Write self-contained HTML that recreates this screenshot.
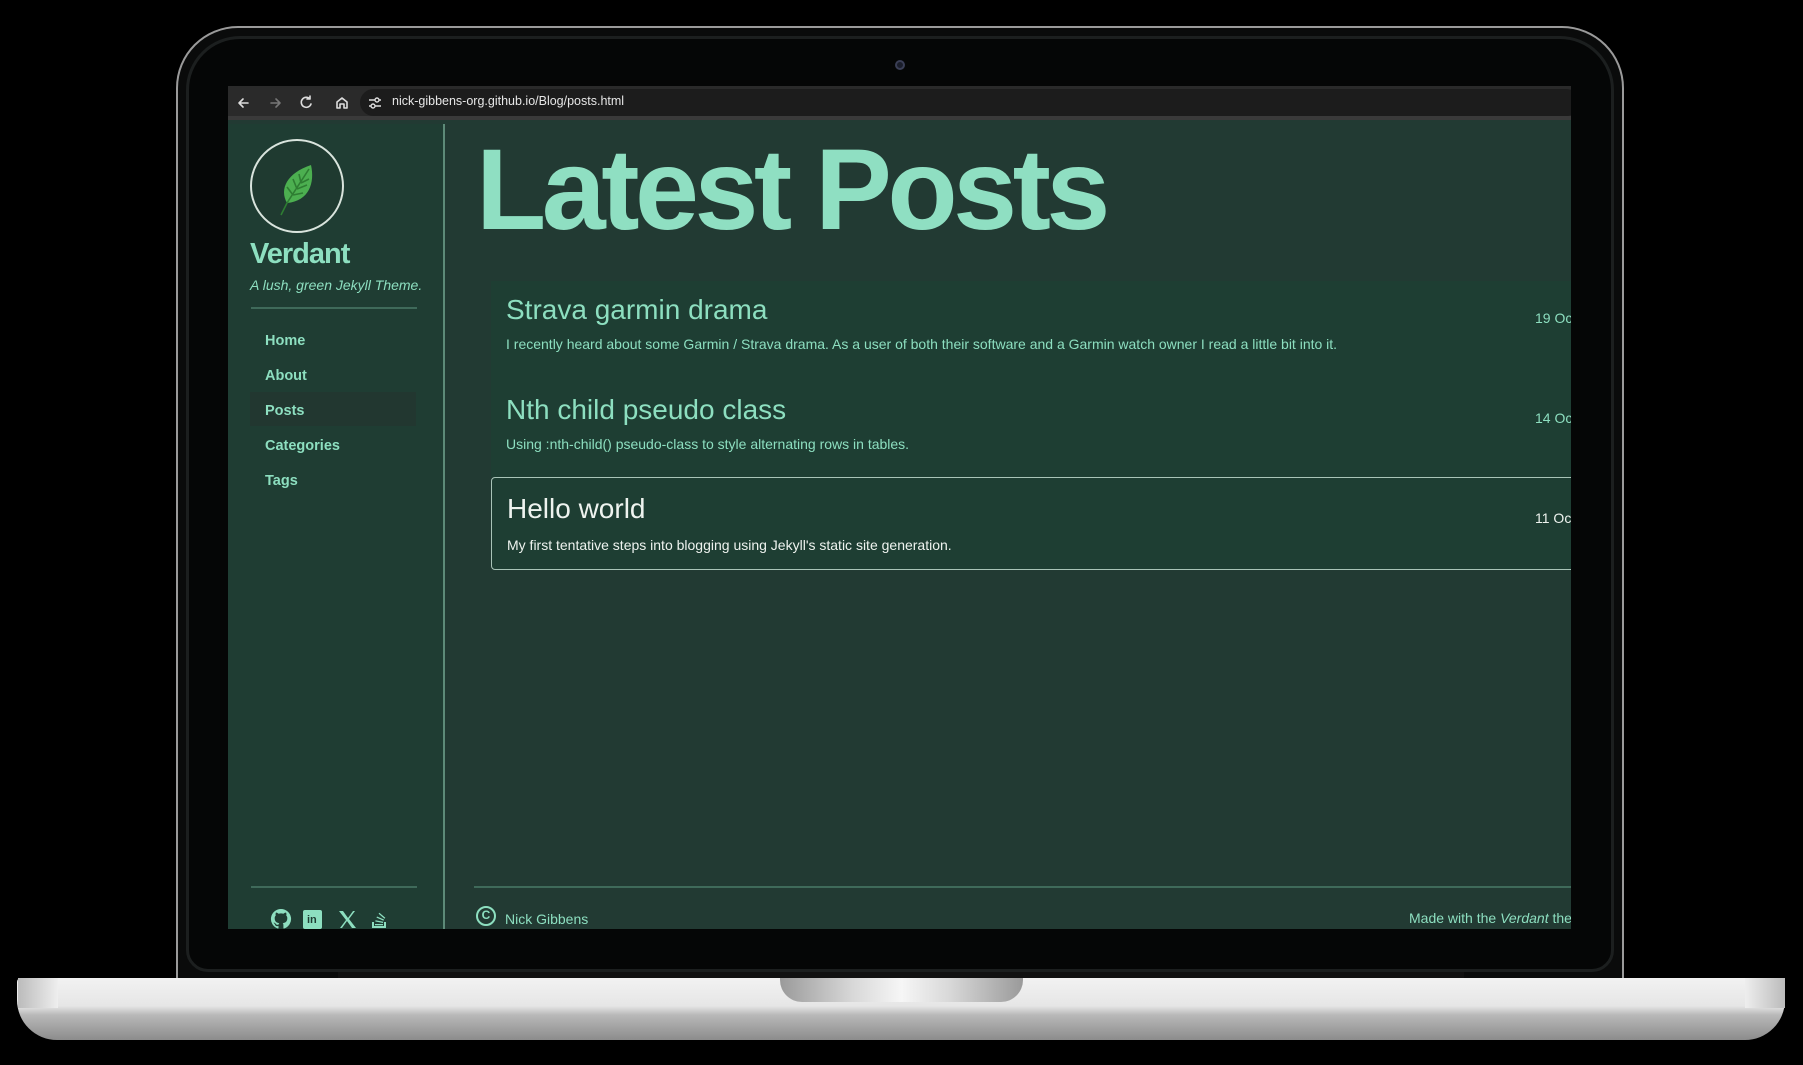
<!DOCTYPE html>
<html><head><meta charset="utf-8"><style>
*{margin:0;padding:0;box-sizing:border-box}
body{width:1803px;height:1065px;background:#000;position:relative;overflow:hidden;font-family:"Liberation Sans",sans-serif}
.abs{position:absolute}
.lid{left:176px;top:26px;width:1448px;height:960px;border-radius:62px 62px 0 0;background:#0a0b0b;border:2px solid #9a9a9a;border-bottom:none}
.lid2{left:186px;top:36px;width:1428px;height:936px;border-radius:54px 54px 22px 22px;background:#050606;border:3px solid #1c1f1f}
.screen{left:228px;top:86px;width:1343px;height:843px;background:#223a33;overflow:hidden}
.bar{left:0;top:0;width:1343px;height:34px;background:#2a2a2a;border-bottom:4px solid #3a3a3a}
.pill{left:132px;top:3px;width:1220px;height:27px;background:#1c1c1c;border-radius:14px}
.url{left:164px;top:8px;color:#e6e6e6;font-size:12.5px}
.side{left:0;top:38px;width:217px;height:805px;background:#1f3d33;border-right:2px solid #5d8a78}
.mint{color:#8ddfc0}
.card{position:absolute;left:263px;width:1090px}
.t{position:absolute;left:15px;font-size:28px;font-family:"Liberation Sans",sans-serif}
.d{position:absolute;left:15px;font-size:14px}
.date{position:absolute;left:1044px;font-size:14px}
.nav{position:absolute;left:37px;font-weight:bold;font-size:14.5px;color:#8ddfc0}
</style></head><body>
<div class="abs lid"></div>
<div class="abs lid2"></div>
<div class="abs" style="left:895px;top:60px;width:10px;height:10px;border-radius:50%;background:#1a1d2a;border:2px solid #3a3e55"></div>
<div class="abs screen">
 <div class="abs bar">
  <svg class="abs" style="left:6px;top:7px" width="130" height="20" viewBox="0 0 130 20" fill="none" stroke-width="1.6" stroke-linecap="round" stroke-linejoin="round">
   <path d="M14 10H5M9 6L5 10L9 14" stroke="#ddd"/>
   <path d="M37 10H46M42 6L46 10L42 14" stroke="#777"/>
   <path d="M76 6A5 5 0 1 0 77 11M76 3V6H73" stroke="#ddd"/>
   <path d="M103 9L108 5L113 9V15H110V11H106V15H103Z" stroke="#ddd"/>
  </svg>
  <div class="abs pill"></div>
  <svg class="abs" style="left:140px;top:10px" width="14" height="14" viewBox="0 0 14 14" stroke="#ddd" stroke-width="1.4" fill="none"><path d="M1 4H7M11 4H13M1 10H3M7 10H13"/><circle cx="9" cy="4" r="2"/><circle cx="5" cy="10" r="2"/></svg>
  <div class="abs url">nick-gibbens-org.github.io/Blog/posts.html</div>
 </div>
 <div class="abs side">
  <div class="abs" style="left:22px;top:15px;width:94px;height:94px;border-radius:50%;border:2px solid #d9e4dd;background:#1f3a30"></div>
  <svg class="abs" style="left:45px;top:35px" width="50" height="60" viewBox="0 0 50 60"><path d="M14 44C6 30 14 14 38 6C42 24 36 42 14 44Z" fill="#4caf50"/><path d="M8 56L14 44L36 10M20 36L14 28M24 30L20 20M28 24L26 15M20 36L30 34M24 30L34 26M28 24L36 20" stroke="#2e7d32" stroke-width="1.6" fill="none"/></svg>
  <div class="abs mint" style="left:22px;top:114px;font-size:29px;font-weight:bold;letter-spacing:-1px">Verdant</div>
  <div class="abs mint" style="left:22px;top:153px;font-size:14px;font-style:italic">A lush, green Jekyll Theme.</div>
  <div class="abs" style="left:23px;top:183px;width:166px;height:2px;background:#3f6a5a"></div>
  <div class="nav" style="top:209px">Home</div>
  <div class="nav" style="top:244px">About</div>
  <div class="abs" style="left:22px;top:268px;width:166px;height:34px;background:#223730"></div>
  <div class="nav" style="top:279px">Posts</div>
  <div class="nav" style="top:314px">Categories</div>
  <div class="nav" style="top:349px">Tags</div>
  <div class="abs" style="left:23px;top:762px;width:166px;height:2px;background:#3f6a5a"></div>
  <svg class="abs" style="left:42px;top:784px" width="140" height="22" viewBox="0 0 140 22" fill="#8ddfc0">
   <path d="M11 1A10 10 0 0 0 7.8 20.5C8.3 20.6 8.5 20.3 8.5 20V18C5.7 18.6 5.1 16.700 5.1 16.7C4.6 15.5 4 15.200 4 15.2C3 14.600 4.100 14.6 4.100 14.6C5.100 14.700 5.700 15.7 5.700 15.7C6.600 17.200 8.100 16.800 8.600 16.500C8.700 15.800 9 15.400 9.300 15.100C7.100 14.900 4.700 14 4.700 10.100C4.700 9 5.100 8.100 5.800 7.400C5.700 7.100 5.300 6.100 5.900 4.700C5.900 4.700 6.700 4.400 8.600 5.700A9.500 9.500 0 0 1 13.400 5.700C15.300 4.400 16.100 4.700 16.100 4.700C16.700 6.100 16.300 7.100 16.200 7.400C16.900 8.100 17.300 9 17.300 10.100C17.300 14 14.900 14.900 12.700 15.100C13 15.400 13.400 16 13.400 16.900V20C13.400 20.300 13.600 20.600 14.200 20.500A10 10 0 0 0 11 1Z"/>
   <rect x="33" y="2" width="19" height="19" rx="2"/>
   <path d="M69 3H73L78 10L83 3H85L79 11L86 20H82L77 13L72 20H70L76 12Z"/>
   <path d="M102 14V20H116V14H114V18H104V14ZM105 16H113V17.3H105ZM105.3 13.5L113 15L113.2 13.7L105.5 12.2ZM106.5 9.6L113.5 12.7L114 11.500L107 8.5ZM108.600 5.8L114.500 10.800L115.300 9.800L109.400 4.800Z"/>
  </svg>
  <div class="abs" style="left:79px;top:790px;font-weight:bold;font-size:11px;color:#1f3d33">in</div>
 </div>
 <div class="abs" style="left:248px;top:47px;font-size:115px;font-weight:bold;letter-spacing:-4.5px;color:#8fdfc2;line-height:1">Latest Posts</div>
 <div class="card" style="top:195px;height:100px;background:#1e3e33">
  <div class="t mint" style="top:13px">Strava garmin drama</div>
  <div class="d mint" style="top:55px">I recently heard about some Garmin / Strava drama. As a user of both their software and a Garmin watch owner I read a little bit into it.</div>
  <div class="date mint" style="top:29px">19 Oct</div>
 </div>
 <div class="card" style="top:295px;height:96px;background:#1e3e33">
  <div class="t mint" style="top:13px">Nth child pseudo class</div>
  <div class="d mint" style="top:55px">Using :nth-child() pseudo-class to style alternating rows in tables.</div>
  <div class="date mint" style="top:29px">14 Oct</div>
 </div>
 <div class="card" style="top:391px;height:93px;background:#1e3e33;border:1.5px solid #a9c4b8;border-radius:4px">
  <div class="t" style="top:15px;color:#eef3ef">Hello world</div>
  <div class="d" style="top:59px;color:#eef3ef">My first tentative steps into blogging using Jekyll's static site generation.</div>
  <div class="date" style="top:32px;left:1043px;color:#eef3ef">11 Oct</div>
 </div>
 <div class="abs" style="left:246px;top:800px;width:1100px;height:2px;background:#3f6a5a"></div>
 <div class="abs mint" style="left:248px;top:820px;width:20px;height:20px;border:2.5px solid #8ddfc0;border-radius:50%;font-size:12px;font-weight:bold;text-align:center;line-height:15px">C</div>
 <div class="abs mint" style="left:277px;top:825px;font-size:14px">Nick Gibbens</div>
 <div class="abs mint" style="left:1181px;top:824px;font-size:14px;white-space:nowrap">Made with the <i>Verdant</i> theme</div>
</div>
<div class="abs" style="left:338px;top:972px;width:1126px;height:8px;background:#111"></div>
<div class="abs" style="left:17px;top:978px;width:1768px;height:62px;border-radius:4px 4px 40px 40px;background:linear-gradient(#f2f2f2 0%,#e6e6e6 45%,#b8b8b8 60%,#8c8c8c 100%)"></div>
<div class="abs" style="left:18px;top:978px;width:40px;height:30px;background:linear-gradient(90deg,#bbb,#eee)"></div>
<div class="abs" style="left:1745px;top:978px;width:40px;height:30px;background:linear-gradient(90deg,#eee,#bbb)"></div>
<div class="abs" style="left:780px;top:978px;width:243px;height:24px;border-radius:0 0 22px 22px;background:linear-gradient(90deg,#9a9a9a,#d8d8d8 30%,#f6f6f6 50%,#d8d8d8 70%,#9a9a9a)"></div>
</body></html>
